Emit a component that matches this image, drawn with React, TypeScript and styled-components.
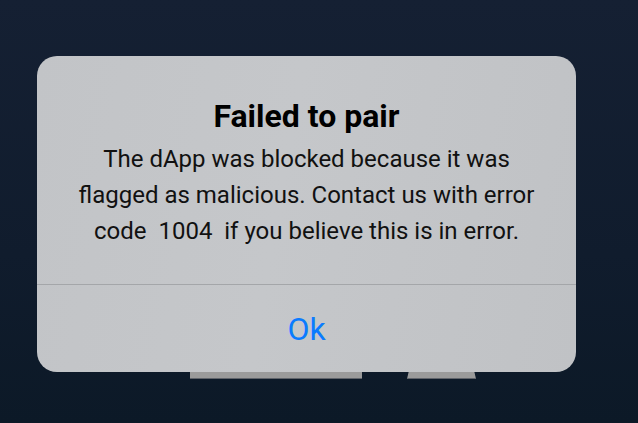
import React from "react";
import styled, { createGlobalStyle } from "styled-components";

const GlobalStyle = createGlobalStyle`
  html, body {
    margin: 0;
    padding: 0;
    width: 100%;
    height: 100%;
  }
  body {
    font-family: Roboto, "Liberation Sans", Arial, sans-serif;
    -webkit-font-smoothing: antialiased;
  }
`;

const Screen = styled.div`
  background: linear-gradient(180deg, #152033 0%, #101c2d 60%, #0c1927 100%);
  height: 423px;
  overflow: hidden;
  position: relative;
  width: 638px;
`;

const BehindRow = styled.div`
  display: flex;
  gap: 45px;
  padding: 366px 0 0 190px;
`;

const BehindButton = styled.div<{ $width: number; $tapered?: boolean }>`
  background: #9b9b9b;
  border-bottom: 1px solid #5f636a;
  height: 12px;
  width: ${({ $width }) => $width}px;
  ${({ $tapered }) =>
    $tapered ? `clip-path: polygon(3px 0, calc(100% - 3px) 0, 100% 100%, 0 100%);` : ""}
`;

const Overlay = styled.div`
  display: flex;
  left: 0;
  padding-left: 37px;
  position: absolute;
  right: 0;
  top: 56px;
`;

const Dialog = styled.div`
  background: linear-gradient(100deg, #c2c4c7 0%, #c5c7ca 45%, #c0c2c5 100%);
  border-radius: 20px;
  display: flex;
  flex-direction: column;
  height: 316px;
  overflow: hidden;
  width: 539px;
`;

const Content = styled.div`
  align-items: center;
  display: flex;
  flex: 1;
  flex-direction: column;
  gap: 6px;
  padding: 41px 30px 0;
`;

const Title = styled.h2`
  color: #000000;
  font-family: Roboto, "Liberation Sans", Arial, sans-serif;
  font-size: 32px;
  font-weight: 700;
  line-height: 38px;
  margin: 0;
  text-align: center;
`;

const Message = styled.p`
  color: #111111;
  font-family: Roboto, "Liberation Sans", Arial, sans-serif;
  font-size: 24px;
  font-weight: 400;
  line-height: 36px;
  margin: 0;
  text-align: center;
  white-space: pre-wrap;
  width: 470px;
`;

const Actions = styled.div`
  align-items: center;
  border-top: 1px solid #a4a6a9;
  display: flex;
  height: 87px;
  justify-content: center;
`;

const OkButton = styled.button`
  background: transparent;
  border: none;
  color: #0a7bff;
  cursor: pointer;
  font-family: Roboto, "Liberation Sans", Arial, sans-serif;
  font-size: 32px;
  font-weight: 400;
  line-height: 38px;
  padding: 0;
`;

export default function App() {
  return (
    <>
      <GlobalStyle />
      <Screen>
        <BehindRow>
          <BehindButton $width={172} />
          <BehindButton $width={69} $tapered />
        </BehindRow>
        <Overlay>
          <Dialog>
            <Content>
              <Title>Failed to pair</Title>
              <Message>
                {"The dApp was blocked because it was flagged as malicious. Contact us with error code  1004  if you believe this is in error."}
              </Message>
            </Content>
            <Actions>
              <OkButton>Ok</OkButton>
            </Actions>
          </Dialog>
        </Overlay>
      </Screen>
    </>
  );
}
